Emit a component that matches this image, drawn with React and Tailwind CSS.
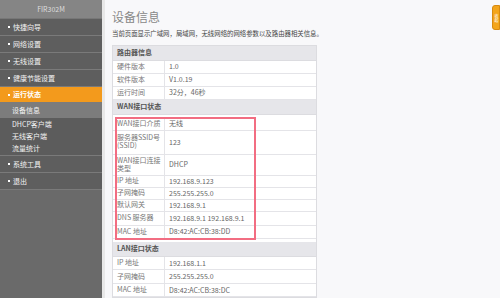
import React from "react"

const menu = [
  { label: "快捷向导" },
  { label: "网络设置" },
  { label: "无线设置" },
  { label: "健康节能设置" },
]

const subMenu = ["设备信息", "DHCP客户端", "无线客户端", "流量统计"]

const routerRows = [
  ["硬件版本", "1.0"],
  ["软件版本", "V1.0.19"],
  ["运行时间", "32分，46秒"],
]

const wanRows = [
  ["WAN接口介质", "无线", "h-[13px]"],
  ["服务器SSID号 (SSID)", "123", "h-[24px]"],
  ["WAN接口连接类型", "DHCP", "h-[21px]"],
  ["IP 地址", "192.168.9.123", "h-[12px]"],
  ["子网掩码", "255.255.255.0", "h-[12px]"],
  ["默认网关", "192.168.9.1", "h-[12px]"],
  ["DNS 服务器", "192.168.9.1 192.168.9.1", "h-[14px]"],
  ["MAC 地址", "D8:42:AC:CB:38:DD", "h-[13px]"],
]

const lanRows = [
  ["IP 地址", "192.168.1.1"],
  ["子网掩码", "255.255.255.0"],
  ["MAC 地址", "D8:42:AC:CB:38:DC"],
]

const Row = ({ label, value, h = "h-[13px]" }) => (
  <div className={`flex ${h} border-b border-[#e4e4e8]`}>
    <div className="w-[52px] shrink-0 border-r border-[#e4e4e8] pl-[4px] pr-[2px] flex items-center leading-[1.1] text-[#777]">
      {label}
    </div>
    <div className="flex-1 px-[4px] flex items-center text-[#666]">{value}</div>
  </div>
)

const Header = ({ children }) => (
  <div className="h-[15px] bg-[#e6e6ea] border-b border-[#dcdce0] px-[4px] flex items-center font-bold text-[#555]">
    {children}
  </div>
)

const MenuItem = ({ children }) => (
  <div className="h-[17px] flex items-center gap-[3px] pl-[8px] border-b border-[#7a7a7a] bg-[#5e5e5e]">
    <span className="w-[2px] h-[2px] bg-white" />
    {children}
  </div>
)

export default function App() {
  return (
    <div
      className="w-[500px] h-[298px] flex overflow-hidden bg-[#f8f8fa]"
      style={{ fontFamily: '"Noto Sans CJK SC", "Liberation Sans", sans-serif' }}
    >
      {/* sidebar */}
      <div className="w-[105px] shrink-0 bg-[#686868] flex flex-col border-r-[3px] border-[#e8e8e8] text-[7px] text-[#f2f2f2]">
        <div className="h-[19px] bg-[#858585] flex items-center justify-center text-[7px] text-[#ddd] border-b border-[#777]">
          FIR302M
        </div>
        {menu.map((m) => (
          <MenuItem key={m.label}>{m.label}</MenuItem>
        ))}
        <div className="h-[15px] flex items-center gap-[3px] pl-[8px] bg-[#f39a1c] text-white font-bold">
          <span className="w-[2px] h-[2px] bg-white" />
          运行状态
        </div>
        {subMenu.map((s, i) => (
          <div
            key={s}
            className={`flex items-center pl-[12px] ${i === 0 ? "h-[16px] bg-[#7c7c7c]" : "h-[12px] bg-[#5c5c5c]"}`}
          >
            {s}
          </div>
        ))}
        <div className="h-[2px] bg-[#5c5c5c] border-b border-[#7a7a7a]" />
        <MenuItem>系统工具</MenuItem>
        <MenuItem>退出</MenuItem>
        <div className="flex-1 bg-[#6a6a6a]" />
      </div>

      {/* main */}
      <div className="relative flex-1 pl-[7px] pt-[9px] text-[7px]">
        <div className="text-[12px] leading-[16px] text-[#888]">设备信息</div>
        <div className="mt-[4px] text-[6.4px] text-[#444] whitespace-nowrap">
          当前页面显示广域网，局域网，无线网络的网络参数以及路由器相关信息。
        </div>
        <div className="mt-[6px] w-[205px] border border-[#dcdce0] bg-white">
          <Header>路由器信息</Header>
          {routerRows.map(([l, v]) => (
            <Row key={l} label={l} value={v} />
          ))}
          <Header>WAN接口状态</Header>
          <div className="relative pt-[3px]">
            {wanRows.map(([l, v, h]) => (
              <Row key={l} label={l} value={v} h={h} />
            ))}
            <div className="absolute z-10 left-[2px] top-[2px] w-[141px] h-[123px] border-2 border-[#f26d82] pointer-events-none" />
          </div>
          <div className="h-[3px]" />
          <Header>LAN接口状态</Header>
          {lanRows.map(([l, v]) => (
            <Row key={l} label={l} value={v} h="h-[13.5px]" />
          ))}
        </div>

        <div className="absolute right-0 top-[5px] w-[8px] h-[25px] rounded-l-[3px] bg-[#f3a51c] border border-[#d88a10] flex items-center justify-center">
          <span className="text-[4px] leading-[5px] text-white [writing-mode:vertical-rl]">收起</span>
        </div>
      </div>
    </div>
  )
}
